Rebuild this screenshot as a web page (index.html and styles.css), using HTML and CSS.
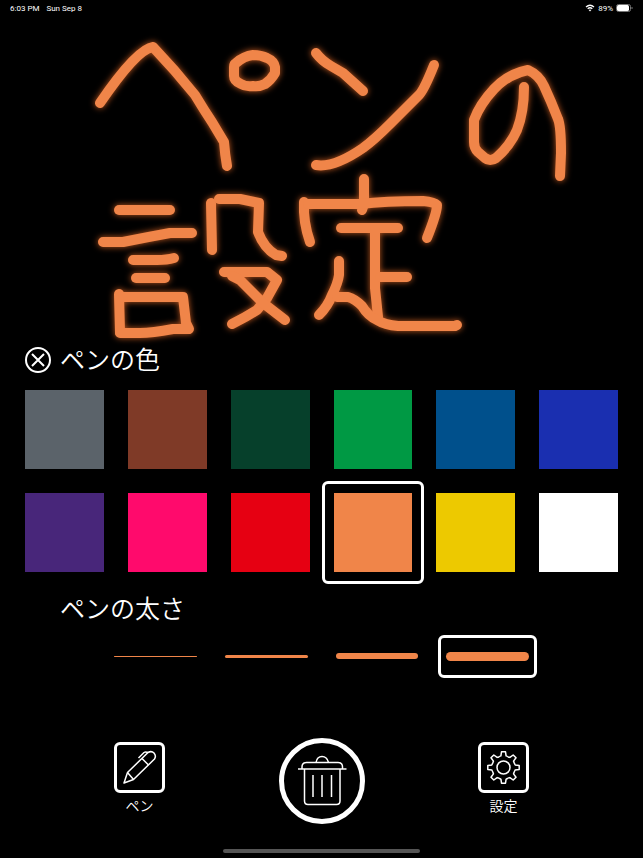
FILE: index.html
```html
<!DOCTYPE html>
<html lang="ja">
<head>
    <meta charset="UTF-8">
    <meta name="viewport" content="width=device-width, initial-scale=1.0">
    <title>ペンの設定</title>
    <link rel="stylesheet" href="styles.css">
</head>
<body>

<header class="status-bar">
    <span>6:03 PM</span>
    <span>Sun Sep 8</span>
    <span class="status-right">
        <svg class="wifi" viewBox="0 0 10 8" aria-hidden="true">
            <path d="M1 3 Q5 -0.6 9 3 M2.7 4.7 Q5 2.7 7.3 4.7" fill="none" stroke="#fff" stroke-width="1.3"/>
            <path d="M3.7 5.9 Q5 4.9 6.3 5.9 L5 7.4 Z" fill="#fff"/>
        </svg>
        89%
        <svg class="battery" viewBox="0 0 17 8" aria-hidden="true">
            <rect x="0.5" y="0.5" width="14" height="7" rx="2" fill="none" stroke="#777"/>
            <rect x="1" y="1" width="12" height="6" rx="1.5" fill="#fff"/>
            <path d="M16 3 v2" stroke="#777"/>
        </svg>
    </span>
</header>

<main>
    <svg class="canvas" viewBox="0 16 643 324" role="img" aria-label="ペンの設定">
        <!-- ペ -->
        <path d="M100 103 Q137 49 153 47 Q175 70 195 95 Q204 110 212 122 L224 142 Q225 155 227 166"/>
        <path d="M236 63 Q244 56 253 55 Q261 55 267 58 Q274 61 275 67 V73 Q271 80 265 84 Q259 87 253 86 Q246 87 241 84 Q234 81 234 76 V67 Q234 64 236 63 Z"/>
        <!-- ン -->
        <path d="M316 53 Q322 61 331 66 L343 73 L363 91"/>
        <path d="M316 165 Q334 168 363 148 Q374 140 390 124 L419 95 Q424 90 434 65"/>
        <!-- の -->
        <path d="M524 87 Q524 112 517 130 Q510 146 496 158 Q490 162 485 158 L478 152 Q474 148 474 142 V120 Q480 104 494 89 Q508 74 528 70 Q539 75 544 86 Q551 101 558 119 Q561 126 561 153 L560 176"/>
        <!-- 設 -->
        <path d="M119 210 H170"/>
        <path d="M103 242 H123 Q148 237 170 233 H192"/>
        <path d="M133 260 H157 Q167 260 174 258"/>
        <path d="M136 278 H165"/>
        <path d="M119 294 L120 332"/>
        <path d="M123 297 H183 L186 323 L189 329 H173 Q152 333 140 333 H120"/>
        <path d="M211 203 L212 250"/>
        <path d="M219 199 H240 L259 203 L258 232 Q264 248 276 255 L282 256"/>
        <path d="M224 272 H267 L277 280 L267 298 L257 310 Q246 317 232 324"/>
        <path d="M232 276 L240 280 L263 303 L285 320"/>
        <!-- 定 -->
        <path d="M364 179 V204 L362 210"/>
        <path d="M304 202 Q303 222 310 242"/>
        <path d="M308 204 H360 Q385 201 423 201 Q434 202 437 205 Q437 213 427 238"/>
        <path d="M341 228 H398"/>
        <path d="M375 230 V288 L378 317"/>
        <path d="M380 277 H407"/>
        <path d="M339 261 V275 Q338 283 332 295 Q328 306 319 315"/>
        <path d="M337 297 H348 Q355 299 362 306 Q368 316 377 320 Q385 325 398 326 H455 L457 325"/>
    </svg>

    <section class="section">
        <div class="heading">
            <button type="button" class="close" aria-label="閉じる">
                <svg viewBox="0 0 26 26" aria-hidden="true">
                    <circle cx="13" cy="13" r="12"/>
                    <path d="M7 7 L19 19 M19 7 L7 19"/>
                </svg>
            </button>
            <h2>ペンの色</h2>
        </div>
        <div class="colors">
            <input type="radio" name="color" class="swatch gray" aria-label="グレー">
            <input type="radio" name="color" class="swatch brown" aria-label="茶">
            <input type="radio" name="color" class="swatch dark-green" aria-label="深緑">
            <input type="radio" name="color" class="swatch green" aria-label="緑">
            <input type="radio" name="color" class="swatch blue" aria-label="青">
            <input type="radio" name="color" class="swatch navy" aria-label="紺">
            <input type="radio" name="color" class="swatch purple" aria-label="紫">
            <input type="radio" name="color" class="swatch pink" aria-label="ピンク">
            <input type="radio" name="color" class="swatch red" aria-label="赤">
            <input type="radio" name="color" class="swatch orange" aria-label="オレンジ" checked>
            <input type="radio" name="color" class="swatch yellow" aria-label="黄">
            <input type="radio" name="color" class="swatch white" aria-label="白">
        </div>
    </section>

    <section class="section">
        <div class="heading indent">
            <h2>ペンの太さ</h2>
        </div>
        <div class="widths">
            <input type="radio" name="width" class="line thin" aria-label="極細">
            <input type="radio" name="width" class="line medium" aria-label="細">
            <input type="radio" name="width" class="line thick" aria-label="中">
            <input type="radio" name="width" class="line extra-thick" aria-label="太" checked>
        </div>
    </section>
</main>

<nav class="toolbar">
    <button type="button" class="tool">
        <span class="tool-icon">
            <svg viewBox="3 3 45 45" aria-hidden="true">
                <path d="M10 41 L13.5 30.5 L34 10.5 Q37.5 8.5 40 11 Q42.5 14 40.5 17 L19.5 37.5 Z"/>
                <path d="M13.5 30.5 L19.5 37.5 M28 16.5 L34.5 23 M24.5 16 L30 10.5 Q31.5 9.5 34 10.5"/>
            </svg>
        </span>
        ペン
    </button>
    <button type="button" class="trash" aria-label="消去">
        <svg viewBox="0 0 86 86" aria-hidden="true">
            <circle class="ring" cx="43" cy="43" r="40.5"/>
            <path d="M37 24.5 Q38 18.5 43 18.5 Q48 18.5 49.5 24.5"/>
            <path d="M23 31 V29 Q23 24.5 27.5 24.5 H59 Q63.5 24.5 63.5 29 V31"/>
            <path d="M19 31 H67.5"/>
            <path d="M25.5 31 V63 Q25.5 66.5 29 66.5 H57.5 Q61 66.5 61 63 V31"/>
            <path d="M34 37 V59 M43 37 V59 M52.5 37 V59"/>
        </svg>
    </button>
    <button type="button" class="tool">
        <span class="tool-icon">
            <svg viewBox="-22.5 -22.5 45 45" aria-hidden="true">
                <defs>
                    <path id="tooth" d="M-4.4 -10.6 Q-3.6 -11.3 -2.6 -11.6 L-2 -15.7 H2 L2.6 -11.6 Q3.6 -11.3 4.4 -10.6"/>
                </defs>
                <circle r="6.5"/>
                <use href="#tooth"/>
                <use href="#tooth" transform="rotate(45)"/>
                <use href="#tooth" transform="rotate(90)"/>
                <use href="#tooth" transform="rotate(135)"/>
                <use href="#tooth" transform="rotate(180)"/>
                <use href="#tooth" transform="rotate(225)"/>
                <use href="#tooth" transform="rotate(270)"/>
                <use href="#tooth" transform="rotate(315)"/>
            </svg>
        </span>
        設定
    </button>
</nav>

<div class="home-indicator"></div>

</body>
</html>
```
FILE: styles.css
```css
* {
    box-sizing: border-box;
}
body {
    margin: 0;
    min-height: 100vh;
    display: flex;
    flex-direction: column;
    background: #000;
    color: #fff;
    font-family: Inter, "Noto Sans CJK JP", sans-serif;
}
button {
    padding: 0;
    border: none;
    background: none;
    color: inherit;
    font-family: inherit;
    cursor: pointer;
}
svg {
    display: block;
}
.status-bar {
    display: flex;
    align-items: center;
    gap: 7px;
    height: 16px;
    padding: 0 10px;
    font-family: Roboto, sans-serif;
    font-size: 8px;
}
.status-right {
    display: flex;
    align-items: center;
    gap: 3px;
    margin-left: auto;
}
.wifi {
    width: 10px;
    height: 8px;
}
.battery {
    width: 17px;
    height: 8px;
}

/* Handwriting */
.canvas {
    width: 100%;
    fill: none;
    stroke: #f08549;
    stroke-width: 10;
    stroke-linecap: round;
    stroke-linejoin: round;
    filter: drop-shadow(0 0 3px rgba(240, 110, 40, 0.8));
}

.section {
    padding: 0 25px;
}
.heading {
    display: flex;
    align-items: center;
    gap: 9px;
    height: 40px;
}
.indent {
    margin-top: 17px;
    padding-left: 35px;
}
h2 {
    margin: 0;
    font-size: 25px;
    font-weight: 350;
    line-height: 40px;
}
.close svg {
    width: 26px;
    height: 26px;
    fill: none;
    stroke: #fff;
    stroke-width: 2;
}

/* Pen colors */
.colors {
    display: grid;
    grid-template-columns: repeat(6, 1fr);
    gap: 24px;
    margin-top: 10px;
}
.swatch,
.line {
    appearance: none;
    position: relative;
    margin: 0;
    cursor: pointer;
}
.swatch {
    aspect-ratio: 1;
}
.swatch:checked::before,
.line:checked::before {
    content: "";
    position: absolute;
    border: 3px solid #fff;
    border-radius: 6px;
}
.swatch:checked::before {
    inset: -12px;
}
.gray { background: #5b636a; }
.brown { background: #7f3a27; }
.dark-green { background: #06402b; }
.green { background: #009944; }
.blue { background: #00508c; }
.navy { background: #1a2fb0; }
.purple { background: #48267a; }
.pink { background: #ff0a6c; }
.red { background: #e60012; }
.orange { background: #f08549; }
.yellow { background: #edc900; }
.white { background: #fff; }

/* Pen widths */
.widths {
    display: grid;
    grid-template-columns: repeat(4, 1fr);
    gap: 28px;
    margin: 6px 89px 0;
}
.line {
    display: flex;
    align-items: center;
    height: 43px;
}
.line:checked::before {
    inset: 0 -8px;
}
.line::after {
    content: "";
    flex: 1;
    border-radius: 5px;
    background: #f08549;
}
.thin::after { height: 1px; }
.medium::after { height: 3px; }
.thick::after { height: 6px; }
.extra-thick::after { height: 9px; }

/* Bottom buttons */
.toolbar {
    display: flex;
    justify-content: space-between;
    align-items: flex-start;
    margin-top: 60px;
    padding: 0 114px;
}
.toolbar svg {
    fill: none;
    stroke: #fff;
    stroke-width: 1.5;
    stroke-linejoin: round;
}
.tool {
    display: flex;
    flex-direction: column;
    align-items: center;
    gap: 3px;
    padding-top: 4px;
    font-size: 14px;
    font-weight: 350;
    line-height: 20px;
}
.tool-icon {
    width: 51px;
    height: 51px;
    border: 3px solid #fff;
    border-radius: 6px;
}
.trash svg {
    width: 86px;
    height: 86px;
}
.trash .ring {
    stroke-width: 5;
}
.home-indicator {
    width: 197px;
    height: 4px;
    margin: auto auto 5px;
    border-radius: 2px;
    background: #555;
}
```
